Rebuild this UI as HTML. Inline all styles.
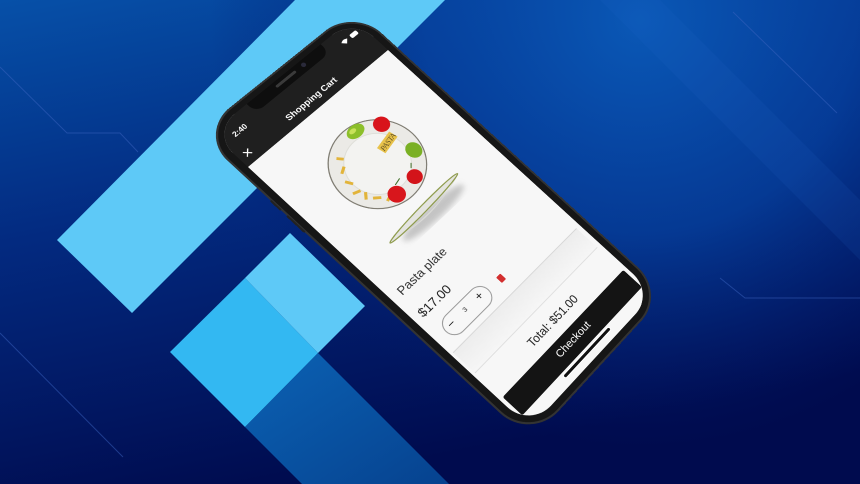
<!DOCTYPE html>
<html><head><meta charset="utf-8">
<style>
html,body{margin:0;padding:0;width:860px;height:484px;overflow:hidden;background:#02155f;}
#bg{position:absolute;left:0;top:0;}
#ph{position:absolute;left:0;top:0;width:188px;height:1px;transform-origin:0 0;
transform:matrix3d(0.87952,-0.60495,0,0.0003475,0.73092,0.67908,0,-0.00003686,0,0,1,0,248,167,0,1);}
#ph div,#ph svg{position:absolute;}
.t{font-family:"Liberation Sans",sans-serif;white-space:nowrap;}
</style></head><body>
<svg id="bg" width="860" height="484" viewBox="0 0 860 484">
<defs>
<linearGradient id="g1" x1="0" y1="0" x2="0.35" y2="1">
<stop offset="0" stop-color="#0650a8"/><stop offset="0.45" stop-color="#032a80"/><stop offset="1" stop-color="#000b4e"/>
</linearGradient>
<radialGradient id="g2" cx="640" cy="20" r="430" gradientUnits="userSpaceOnUse">
<stop offset="0" stop-color="#0a58b6" stop-opacity="1"/><stop offset="0.5" stop-color="#0642a0" stop-opacity="0.75"/><stop offset="1" stop-color="#02186a" stop-opacity="0"/>
</radialGradient>
<linearGradient id="g3" x1="0" y1="0" x2="1" y2="1">
<stop offset="0" stop-color="#0b62b4"/><stop offset="1" stop-color="#06428f"/>
</linearGradient>
</defs>
<rect width="860" height="484" fill="url(#g1)"/>
<rect width="860" height="484" fill="url(#g2)"/>
<polygon points="600,0 660,0 860,200 860,260" fill="#2a6ed0" opacity="0.12"/>
<polygon points="295,0 445,0 132,313 57,240" fill="#5ec9f7"/>
<polygon points="170,352 245,278 318,353 245,427" fill="#33b8f2"/>
<polygon points="245,278 290,233 365,306 318,353" fill="#5ec9f7"/>
<polygon points="245,427 318,353 449,484 302,484" fill="url(#g3)"/>
<g stroke="#3b64c0" stroke-width="1" fill="none" opacity="0.5">
<polyline points="0,67 67,133 120,133 138,152"/>
<line x1="0" y1="333" x2="123" y2="457"/>
<line x1="733" y1="12" x2="837" y2="113"/>
<polyline points="720,278 745,298 860,298"/>
</g>
</svg>

<div id="ph">
 <div style="left:-9px;top:-58px;width:206px;height:443px;border-radius:40px;background:#161616;box-shadow:inset 0 0 0 2px #333;"></div>
 <div style="left:-10px;top:40px;width:2px;height:14px;background:#222;border-radius:1px"></div>
 <div style="left:-10px;top:62px;width:2px;height:24px;background:#222;border-radius:1px"></div>
 <div style="left:0;top:-50px;width:188px;height:426px;border-radius:30px;background:#f7f7f7;overflow:hidden;">
  <div style="left:0;top:0;width:188px;height:50px;background:#1f1f1f;"></div>
  <div style="left:45px;top:0;width:98px;height:13px;background:#0e0e0e;border-radius:0 0 10px 10px;"></div>
  <div style="left:78px;top:4px;width:26px;height:3px;background:#3a3a3a;border-radius:2px;"></div>
  <div style="left:112px;top:3px;width:5px;height:5px;background:#2a2a3a;border-radius:50%;"></div>
  <div class="t" style="left:13px;top:12px;font-size:8px;font-weight:bold;color:#fff;">2:40</div>
  <svg style="left:158px;top:10px" width="24" height="8" viewBox="0 0 24 8">
   <path d="M1 3 Q5 0 9 3 L5 7 Z" fill="#fff"/>
   <rect x="13" y="1.5" width="9" height="5" rx="1.5" fill="#fff"/>
  </svg>
  <div class="t" style="left:5px;top:32px;font-size:12px;color:#fff;">✕</div>
  <div class="t" style="left:0;top:33px;width:188px;text-align:center;font-size:9.5px;font-weight:bold;color:#fff;">Shopping Cart</div>

  <svg style="left:40px;top:82px" width="102" height="102" viewBox="-51 -51 102 102">
   <circle r="48" fill="#ebeae6" stroke="#7d7a70" stroke-width="1.2"/>
   <circle r="33" fill="#f3f3f1" stroke="#deded8"/>
   <g fill="#e2b43a">
    <rect x="-33" y="-20" width="8" height="3" transform="rotate(-30 -29 -18)"/>
    <rect x="-38" y="-6" width="8" height="3" transform="rotate(60 -34 -5)"/>
    <rect x="-40" y="6" width="8" height="3" transform="rotate(20 -36 7)"/>
    <rect x="-37" y="15" width="8" height="3" transform="rotate(-50 -33 16)"/>
    <rect x="-30" y="24" width="8" height="3" transform="rotate(40 -26 25)"/>
    <rect x="-22" y="32" width="8" height="3" transform="rotate(-20 -18 33)"/>
    <rect x="-26" y="-30" width="7" height="3" transform="rotate(50 -22 -29)"/>
   </g>
   <ellipse cx="9" cy="-40" rx="10" ry="7" fill="#8cbf2a"/>
   <ellipse cx="7" cy="-42" rx="4" ry="2.5" fill="#c8e25a"/>
   <circle cx="33" cy="-28" r="8.5" fill="#d8141b"/>
   <rect x="12" y="-15" width="22" height="10" fill="#e8c24a" transform="rotate(-12 23 -10)"/>
   <text x="13" y="-7" font-family="Liberation Serif,serif" font-size="8" font-style="italic" fill="#5a4a20" transform="rotate(-12 23 -10)">PASTA</text>
   <ellipse cx="36" cy="14" rx="8" ry="9" fill="#7ab024"/>
   <circle cx="16" cy="35" r="8" fill="#d3141a"/>
   <circle cx="-10" cy="36" r="9" fill="#d8161c"/>
   <path d="M-4 28 l8 -2 M20 26 l4 -4" stroke="#3a6a20" stroke-width="1"/>
  </svg>

  <svg style="left:35px;top:180px" width="110" height="50" viewBox="0 0 110 50">
   <defs><filter id="bl"><feGaussianBlur stdDeviation="3"/></filter></defs>
   <ellipse cx="58" cy="28" rx="42" ry="8" fill="#b8b8b8" filter="url(#bl)" opacity="0.8"/>
   <path d="M8 20 Q55 34 102 16 L100 18 Q55 30 10 21 Z" fill="#d9d9d6"/>
   <ellipse cx="55" cy="18" rx="50" ry="3.5" transform="rotate(-3 55 18)" fill="#e4e4e0" stroke="#8d9a4a" stroke-width="1.2"/>
  </svg>

  <div class="t" style="left:10px;top:236px;font-size:12.5px;color:#333;">Pasta plate</div>
  <div class="t" style="left:8px;top:265px;font-size:13px;color:#222;">$17.00</div>
  <div style="left:13px;top:290px;width:58px;height:22px;border:1px solid #9a9a9a;border-radius:12px;"></div>
  <div class="t" style="left:19px;top:293px;font-size:12px;color:#222;">−</div>
  <div class="t" style="left:40px;top:297px;font-size:7px;color:#333;">3</div>
  <div class="t" style="left:58px;top:293px;font-size:12px;color:#222;">+</div>
  <div style="left:87px;top:299px;width:6px;height:8px;background:#d32f2f;border-radius:1px;"></div>

  <div style="left:3px;top:321px;width:180px;height:1px;background:#d8d8d8;"></div>
  <div style="left:3px;top:322px;width:180px;height:28px;background:linear-gradient(#ededed,#f6f6f6);"></div>
  <div style="left:3px;top:350px;width:180px;height:1px;background:#e0e0e0;"></div>

  <div class="t" style="left:0;top:363px;width:188px;text-align:center;font-size:12px;color:#222;">Total: $51.00</div>
  <div style="left:4px;top:386px;width:180px;height:26px;background:#141414;border-radius:2px;"></div>
  <div class="t" style="left:4px;top:392px;width:180px;text-align:center;font-size:11px;color:#fff;">Checkout</div>
  <div style="left:60px;top:415px;width:68px;height:3px;background:#111;border-radius:2px;box-shadow:0 0 0 1px #fff;"></div>
 </div>
</div>
</body></html>
